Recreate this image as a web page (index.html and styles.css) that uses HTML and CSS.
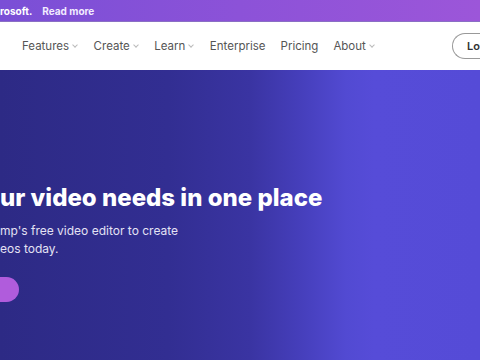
FILE: index.html
```html
<!DOCTYPE html>
<html lang="en">
<head>
    <meta charset="UTF-8">
    <meta name="viewport" content="width=device-width, initial-scale=1.0">
    <title>Clipchamp</title>
    <link rel="stylesheet" href="styles.css">
</head>
<body>

    <div class="top-banner">
        <p class="banner-text">rosoft.</p>
        <a class="banner-link" href="#">Read more</a>
    </div>

    <header class="main-nav">
        <ul class="nav-list">
            <li class="nav-item">Features <span class="chev"></span></li>
            <li class="nav-item">Create <span class="chev"></span></li>
            <li class="nav-item">Learn <span class="chev"></span></li>
            <li class="nav-item">Enterprise</li>
            <li class="nav-item">Pricing</li>
            <li class="nav-item">About <span class="chev"></span></li>
        </ul>
        <a class="login-btn" href="#">Lo</a>
    </header>

    <section class="hero">
        <h1 class="hero-title">ur video needs in one place</h1>
        <p class="hero-sub">mp's free video editor to create<br>eos today.</p>
        <a class="cta-btn" href="#"></a>
    </section>

</body>
</html>
```

FILE: styles.css
```css
body, body *, body *::before, body *::after {
    box-sizing: border-box;
    padding: 0;
    margin: 0;
}
body {
    font-family: Inter, "Noto Sans", sans-serif;
    overflow: hidden;
    width: 480px;
    height: 360px;
}
.top-banner {
    height: 21px;
    background: linear-gradient(90deg, #7a4fd6, #8c52d8 50%, #9c56d9);
    display: flex;
    align-items: center;
    gap: 10px;
    font-size: 10px;
    font-weight: 700;
}
.banner-text {
    color: #fff;
}
.banner-link {
    color: #f2ecff;
    text-decoration: none;
}
.main-nav {
    height: 49px;
    background-color: #fff;
    display: flex;
    align-items: center;
    justify-content: space-between;
    padding-left: 22px;
    border-top: 1px solid #8a6fc4;
}
.nav-list {
    list-style-type: none;
    display: flex;
    gap: 15px;
}
.nav-item {
    font-size: 11.5px;
    color: #555;
    display: flex;
    align-items: center;
    gap: 4px;
}
.chev {
    width: 4px;
    height: 4px;
    border-right: 1px solid #bbb;
    border-bottom: 1px solid #bbb;
    transform: rotate(45deg);
    margin-top: -2px;
    margin-right: 1.5px;
}
.login-btn {
    font-size: 11px;
    font-weight: 600;
    color: #333;
    text-decoration: none;
    border: 1px solid #999;
    border-right: none;
    border-radius: 13px 0 0 13px;
    height: 26px;
    width: 28px;
    padding-left: 14px;
    display: flex;
    align-items: center;
}
.hero {
    height: 290px;
    background: linear-gradient(90deg, #2d2a85 0%, #322e92 35%, #3a34a2 52%, #463fbc 63%, #524ad2 72%, #564cd8 78%, #554bd7 100%);
    padding-top: 113px;
}
.hero-title {
    font-size: 24px;
    font-weight: 800;
    color: #fff;
    white-space: nowrap;
}
.hero-sub {
    font-size: 12px;
    color: #e4e2f4;
    line-height: 18px;
    margin-top: 10px;
}
.cta-btn {
    display: block;
    margin-top: 19px;
    height: 25px;
    width: 19px;
    border-radius: 0 13px 13px 0;
    background-color: #b05cdc;
}
```
